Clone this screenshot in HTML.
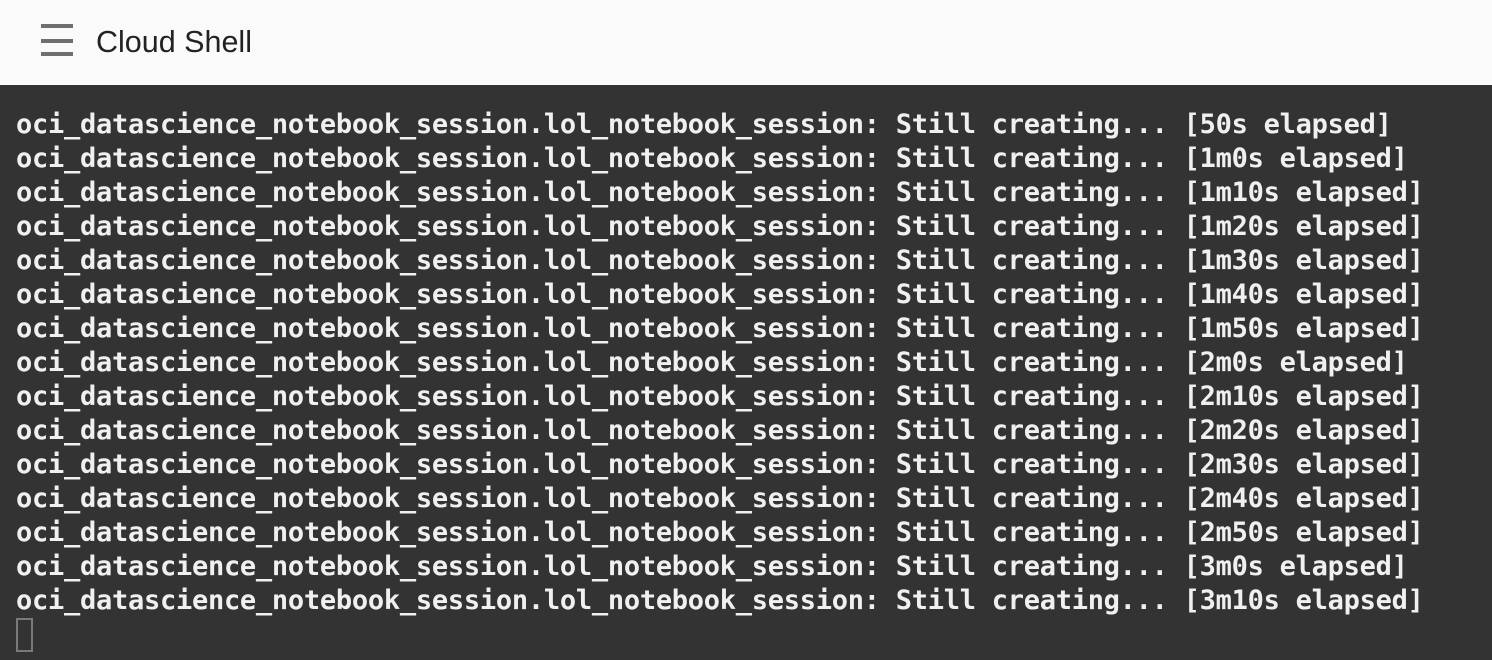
<!DOCTYPE html>
<html><head><style>
html,body{margin:0;padding:0;width:1492px;height:660px;overflow:hidden;background:#333;}
.hdr{position:absolute;left:0;top:0;width:1492px;height:85px;background:#fafafa;}
.bar{position:absolute;left:41px;width:32px;height:4px;background:#6f6f6f;}
.title{position:absolute;left:96px;top:23px;font:30.5px "Liberation Sans",sans-serif;color:#222;line-height:38px;}
pre{position:absolute;left:16px;top:108px;margin:0;font:bold 27px/34px "DejaVu Sans Mono",monospace;letter-spacing:-0.26px;color:#f0f0f0;}
.cur{position:absolute;left:16px;top:618px;width:13px;height:30px;border:2px solid #7a7a7a;}
</style></head><body>
<div class="hdr">
<div class="bar" style="top:24px"></div>
<div class="bar" style="top:39px"></div>
<div class="bar" style="top:52px"></div>
<div class="title">Cloud Shell</div>
</div>
<pre>oci_datascience_notebook_session.lol_notebook_session: Still creating... [50s elapsed]
oci_datascience_notebook_session.lol_notebook_session: Still creating... [1m0s elapsed]
oci_datascience_notebook_session.lol_notebook_session: Still creating... [1m10s elapsed]
oci_datascience_notebook_session.lol_notebook_session: Still creating... [1m20s elapsed]
oci_datascience_notebook_session.lol_notebook_session: Still creating... [1m30s elapsed]
oci_datascience_notebook_session.lol_notebook_session: Still creating... [1m40s elapsed]
oci_datascience_notebook_session.lol_notebook_session: Still creating... [1m50s elapsed]
oci_datascience_notebook_session.lol_notebook_session: Still creating... [2m0s elapsed]
oci_datascience_notebook_session.lol_notebook_session: Still creating... [2m10s elapsed]
oci_datascience_notebook_session.lol_notebook_session: Still creating... [2m20s elapsed]
oci_datascience_notebook_session.lol_notebook_session: Still creating... [2m30s elapsed]
oci_datascience_notebook_session.lol_notebook_session: Still creating... [2m40s elapsed]
oci_datascience_notebook_session.lol_notebook_session: Still creating... [2m50s elapsed]
oci_datascience_notebook_session.lol_notebook_session: Still creating... [3m0s elapsed]
oci_datascience_notebook_session.lol_notebook_session: Still creating... [3m10s elapsed]</pre>
<div class="cur"></div>
</body></html>
